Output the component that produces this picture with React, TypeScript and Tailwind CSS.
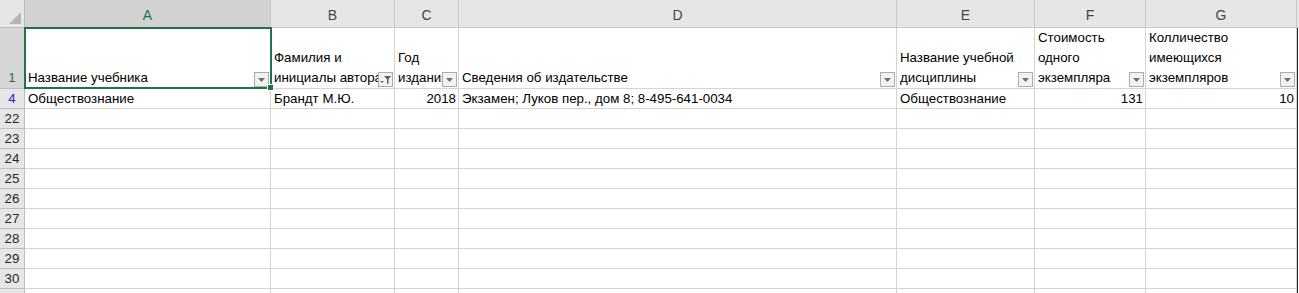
import React from "react";

const cols = [
  { key: "A", w: 246 },
  { key: "B", w: 124 },
  { key: "C", w: 64 },
  { key: "D", w: 438 },
  { key: "E", w: 138 },
  { key: "F", w: 111 },
  { key: "G", w: 151 },
];

// header row (row 1) — wrapped text, bottom aligned
const headRow: { lines: string[]; active?: boolean }[] = [
  { lines: ["Название учебника"] },
  { lines: ["Фамилия и", "инициалы автора"], active: true },
  { lines: ["Год", "издания"] },
  { lines: ["Сведения об издательстве"] },
  { lines: ["Название учебной", "дисциплины"] },
  { lines: ["Стоимость", "одного", "экземпляра"] },
  { lines: ["Колличество", "имеющихся", "экземпляров"] },
];

const dataRow: { v: string; num?: boolean }[] = [
  { v: "Обществознание" },
  { v: "Брандт М.Ю." },
  { v: "2018", num: true },
  { v: "Экзамен; Луков пер., дом 8; 8-495-641-0034" },
  { v: "Обществознание" },
  { v: "131", num: true },
  { v: "10", num: true },
];

const emptyRows = [22, 23, 24, 25, 26, 27, 28, 29, 30];

function FilterBtn({ active }: { active?: boolean }) {
  return (
    <span className="absolute right-[1px] bottom-[1px] z-20 flex h-[15px] w-[15px] items-center justify-center border border-[#acacac] bg-[#f2f2f2]">
      {active ? (
        <svg width="13" height="13" viewBox="0 0 13 13">
          <polygon points="1,8 5,8 3,10" fill="#6a6a6a" />
          <polygon points="5,3 12,3 9.5,6 9.5,10.5 8,11 8,6" fill="#5a5a5a" />
        </svg>
      ) : (
        <svg width="9" height="6" viewBox="0 0 9 6">
          <polygon points="1,1 8,1 4.5,5" fill="#707070" />
        </svg>
      )}
    </span>
  );
}

export default function App() {
  return (
    <div className="h-[293px] w-[1299px] overflow-hidden bg-white font-['Liberation_Sans',Arial,sans-serif] text-[13.3px] text-black">
      <div className="grid grid-cols-[25px_246px_124px_64px_438px_138px_111px_151px_1fr]">
        {/* column letters */}
        <div className="relative h-[28px] border-r border-b border-[#bdbdbd] bg-[#e6e6e6]">
          <svg className="absolute right-[3px] bottom-[3px]" width="12" height="12" viewBox="0 0 12 12">
            <polygon points="12,0 12,12 0,12" fill="#b5b5b5" />
          </svg>
        </div>
        {cols.map((c, i) => (
          <div
            key={c.key}
            className={`flex h-[28px] items-end justify-center border-r border-b border-[#c8c8c8] pb-[2px] text-[14px] leading-[20px] ${
              i === 0 ? "bg-[#d2d2d2] text-[#217346]" : "bg-[#e6e6e6] text-[#444]"
            }`}
          >
            {c.key}
          </div>
        ))}
        <div className="h-[28px] border-b border-[#c8c8c8] bg-[#e6e6e6]" />

        {/* row 1 */}
        <div className="flex h-[61px] items-end justify-center border-r border-b border-[#bdbdbd] bg-[#d6d6d6] leading-[20px] text-[#217346]">
          1
        </div>
        {headRow.map((h, i) => (
          <div key={i} className="relative flex h-[61px] flex-col justify-end border-r border-b border-[#d4d4d4] px-[3px] leading-[20px]">
            {h.lines.map((l) => (
              <div key={l} className="overflow-hidden whitespace-nowrap">
                {l}
              </div>
            ))}
            <FilterBtn active={h.active} />
            {i === 0 && (
              <div className="pointer-events-none absolute -top-[1px] -left-[1px] z-30 h-[62px] w-[248px] border-2 border-[#217346]">
                <span className="absolute -right-[4px] -bottom-[4px] h-[7px] w-[7px] border border-white bg-[#217346]" />
              </div>
            )}
          </div>
        ))}
        <div className="h-[61px] border-l border-[#222]" />

        {/* row 4 */}
        <div className="flex h-[20px] items-center justify-center border-r border-b border-[#bdbdbd] bg-[#e6e6e6] text-[#1f1fe0]">
          4
        </div>
        {dataRow.map((d, i) => (
          <div
            key={i}
            className={`flex h-[20px] items-center overflow-hidden whitespace-nowrap border-r border-b border-[#d4d4d4] ${
              d.num ? "justify-end pr-[2px]" : "pl-[3px]"
            }`}
          >
            {d.v}
          </div>
        ))}
        <div className="h-[20px] border-l border-[#222]" />

        {/* empty rows */}
        {emptyRows.map((r) => (
          <React.Fragment key={r}>
            <div className="flex h-[20px] items-center justify-center border-r border-b border-[#bdbdbd] bg-[#e6e6e6] text-[#262626]">
              {r}
            </div>
            {cols.map((c) => (
              <div key={c.key} className="h-[20px] border-r border-b border-[#d4d4d4]" />
            ))}
            <div className="h-[20px] border-l border-[#222]" />
          </React.Fragment>
        ))}

        {/* partly visible next row */}
        <div className="h-[20px] border-r border-[#bdbdbd] bg-[#e6e6e6]" />
        {cols.map((c) => (
          <div key={c.key} className="h-[20px] border-r border-[#d4d4d4]" />
        ))}
        <div className="h-[20px] border-l border-[#222]" />
      </div>
    </div>
  );
}
